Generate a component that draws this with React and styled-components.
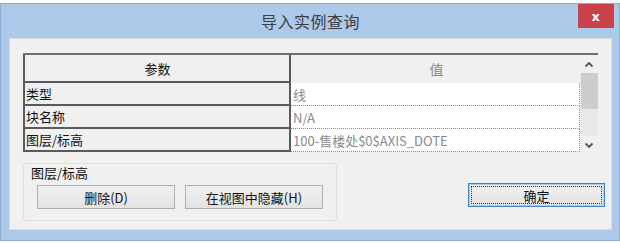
import { Fragment } from "react";
import styled, { createGlobalStyle } from "styled-components";

const GlobalStyle = createGlobalStyle`
  html, body {
    margin: 0;
    padding: 0;
    background: #fbfbfb;
  }
  body {
    font-family: "Noto Sans CJK SC", "Noto Sans", sans-serif;
  }
`;

const Frame = styled.div`
  margin-top: 3px;
  width: 620px;
  height: 238px;
  box-sizing: border-box;
  border: 1px solid #8eaed3;
  background: #adc9ea;
  padding: 0 7px 10px 8px;
  display: flex;
  flex-direction: column;
`;

const TitleBar = styled.div`
  height: 34px;
  flex-shrink: 0;
  display: flex;
  align-items: center;
  justify-content: center;
  position: relative;
  color: #3a3f47;
  font-size: 16px;
  letter-spacing: 0.5px;
`;

const CloseButton = styled.div`
  position: absolute;
  top: 0;
  right: -2px;
  width: 36px;
  height: 24px;
  background: #c9424a;
  color: #fff;
  display: flex;
  align-items: center;
  justify-content: center;
  font-family: "DejaVu Sans", sans-serif;
  font-size: 13px;
  font-weight: bold;
`;

const Client = styled.div`
  flex: 1;
  background: #f0f0f0;
  border: 1px solid #d6dde6;
  padding: 14px 6px 0 13px;
  display: flex;
  flex-direction: column;
`;

const ListView = styled.div`
  width: 575px;
  height: 99px;
  border-top: 2px solid #6e6e6e;
  display: flex;
  font-size: 13px;
`;

const Columns = styled.div`
  width: 557px;
  display: grid;
  grid-template-columns: 268px 289px;
  grid-template-rows: 28px repeat(3, 23px);
`;

const ParamCell = styled.div`
  box-sizing: border-box;
  border-left: 2px solid #5a5a5a;
  border-right: 2px solid #5a5a5a;
  border-bottom: 2px solid #5a5a5a;
  background: #f0f0f0;
  color: #111;
  display: flex;
  align-items: center;
  justify-content: ${(p) => (p.$header ? "center" : "flex-start")};
  padding-left: 1px;
  white-space: nowrap;
  overflow: hidden;
`;

const ValueCell = styled.div`
  box-sizing: border-box;
  background: ${(p) => (p.$header ? "#f0f0f0" : "#fff")};
  border-bottom: ${(p) => (p.$header ? "none" : "1px dotted #8c8c8c")};
  border-right: ${(p) => (p.$header ? "none" : "1px dotted #8c8c8c")};
  color: #8a8a8a;
  font-size: ${(p) => (p.$header ? "14px" : "13px")};
  display: flex;
  align-items: center;
  justify-content: ${(p) => (p.$header ? "center" : "flex-start")};
  padding-left: 2px;
  white-space: nowrap;
  overflow: hidden;
`;

const ScrollBar = styled.div`
  width: 18px;
  display: flex;
  flex-direction: column;
  align-items: center;
  background: #f0f0f0;
`;

const Arrow = styled.div`
  height: 18px;
  display: flex;
  align-items: center;
  justify-content: center;
`;

const Track = styled.div`
  flex: 1;
  width: 17px;
  background: #e8e8e8;
`;

const Thumb = styled.div`
  width: 17px;
  height: 36px;
  background: #cdcdcd;
`;

const Bottom = styled.div`
  display: flex;
  justify-content: space-between;
  margin-top: 9px;
`;

const GroupBox = styled.div`
  width: 314px;
  height: 58px;
  box-sizing: border-box;
  border: 1px solid #e2e2e2;
  border-radius: 2px;
  padding: 0 0 0 13px;
  display: flex;
  flex-direction: column;
`;

const GroupLabel = styled.div`
  font-size: 13px;
  color: #111;
  margin: 0 0 3px -6px;
  height: 18px;
  line-height: 18px;
`;

const ButtonRow = styled.div`
  display: flex;
  gap: 10px;
`;

const Button = styled.div`
  width: ${(p) => (p.$default ? "137px" : "138px")};
  height: 24px;
  box-sizing: border-box;
  border: 1px solid ${(p) => (p.$default ? "#3c86c8" : "#adadad")};
  background: linear-gradient(#f0f0f0, #e3e3e3);
  display: flex;
  align-items: center;
  justify-content: center;
  font-size: 13px;
  color: #111;
  position: relative;
  box-shadow: ${(p) => (p.$default ? "inset 0 0 0 1px #a9cdee" : "none")};
`;

const FocusRing = styled.div`
  position: absolute;
  inset: 2px;
  border: 1px dotted #333;
`;

const OkWrap = styled.div`
  padding-top: 20px;
`;

const Chevron = ({ up }) => (
  <svg width="10" height="7" viewBox="0 0 10 7">
    <path
      d={up ? "M1.5 5.5 L5 2 L8.5 5.5" : "M1.5 1.5 L5 5 L8.5 1.5"}
      fill="none"
      stroke="#555"
      strokeWidth="1.8"
    />
  </svg>
);

const rows = [
  ["类型", "线"],
  ["块名称", "N/A"],
  ["图层/标高", "100-售楼处$0$AXIS_DOTE"],
];

export default function App() {
  return (
    <>
      <GlobalStyle />
      <Frame>
        <TitleBar>
          导入实例查询
          <CloseButton>x</CloseButton>
        </TitleBar>
        <Client>
          <ListView>
            <Columns>
              <ParamCell $header>参数</ParamCell>
              <ValueCell $header>值</ValueCell>
              {rows.map(([k, v]) => (
                <Fragment key={k}>
                  <ParamCell>{k}</ParamCell>
                  <ValueCell>{v}</ValueCell>
                </Fragment>
              ))}
            </Columns>
            <ScrollBar>
              <Arrow>
                <Chevron up />
              </Arrow>
              <Track>
                <Thumb />
              </Track>
              <Arrow>
                <Chevron />
              </Arrow>
            </ScrollBar>
          </ListView>
          <Bottom>
            <GroupBox>
              <GroupLabel>图层/标高</GroupLabel>
              <ButtonRow>
                <Button>删除(D)</Button>
                <Button>在视图中隐藏(H)</Button>
              </ButtonRow>
            </GroupBox>
            <OkWrap>
              <Button $default>
                <FocusRing />
                确定
              </Button>
            </OkWrap>
          </Bottom>
        </Client>
      </Frame>
    </>
  );
}
